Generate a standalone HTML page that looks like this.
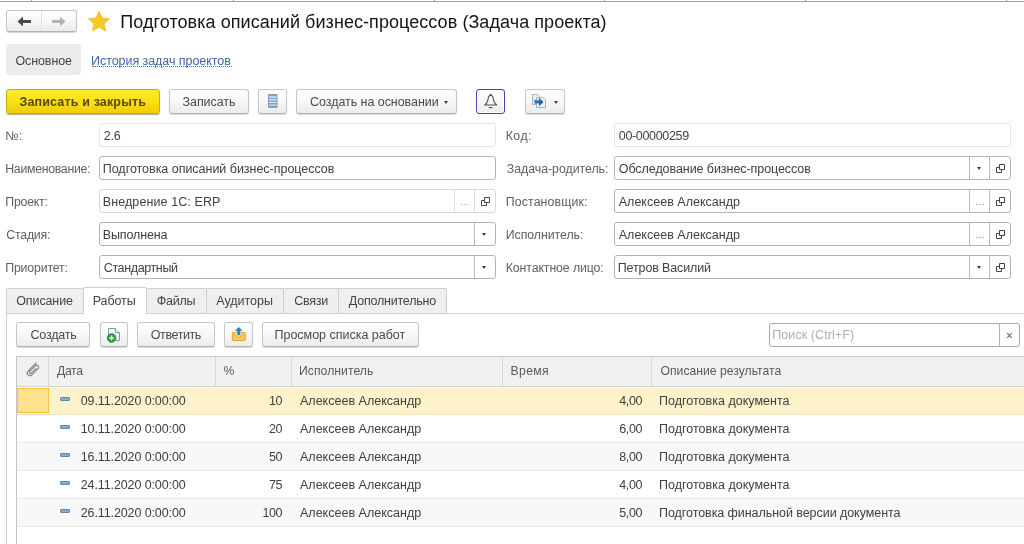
<!DOCTYPE html>
<html lang="ru">
<head>
<meta charset="utf-8">
<title>Подготовка описаний бизнес-процессов (Задача проекта)</title>
<style>
*{box-sizing:border-box;margin:0;padding:0}
html,body{width:1024px;height:544px;overflow:hidden;background:#fff}
body{position:relative;font-family:"Liberation Sans",Arial,sans-serif;font-size:12.5px;color:#333}
.a{position:absolute}
.t{position:absolute;white-space:nowrap;z-index:5}
.btn{position:absolute;height:25px;border:1px solid #c6c6c6;border-bottom-color:#b2b2b2;border-radius:3px;background:linear-gradient(#ffffff,#f8f8f8 45%,#ececec);box-shadow:0 1px 1px rgba(0,0,0,.16)}
.ybtn{background:linear-gradient(#ffeb30,#fbdf14 50%,#f1cd08);border-color:#c2ac1c;box-shadow:0 1px 1px rgba(80,70,0,.45)}
.inp{position:absolute;height:24px;width:397px;border:1px solid #b4b4b4;border-radius:3px;background:#fff}
.inp.ro{border-color:#e6e6e6}
.inp.ro2{border-color:#dadada}
.sep{position:absolute;top:0;bottom:0;width:1px;background:#bcbcbc}
.ro .sep{background:#e6e6e6}.ro2 .sep{background:#dedede}
.dd{position:absolute;width:0;height:0;border-left:2.5px solid transparent;border-right:2.5px solid transparent;border-top:3px solid #3c3c3c}
.tab{position:absolute;top:288px;height:25px;border:1px solid #cfcfcf;border-bottom:none;background:#efefef;border-radius:2px 2px 0 0}
.tab.act{background:#fff;top:287px;height:27px;z-index:2}
.th{position:absolute;top:357px;height:30px;background:#f1f1f1;border-right:1px solid #d8d8d8;border-bottom:1px solid #d4d4d4}
.row{position:absolute;left:17px;width:1007px;height:28px;border-bottom:1px solid #e9e9e9}
.row.alt{background:#f8f8f8}
.row.sel{background:#fdf2c9;border-bottom-color:#eee3b8;border-top:1px solid #fff}
.dash{position:absolute;left:43px;top:10px;width:10px;height:4px;background:#86abd0;border:1px solid #6088b0;border-radius:1px}
.cd{position:absolute;top:0;bottom:0;width:1px;background:rgba(0,0,0,.03)}
</style>
</head>
<body>
<div class="a" style="left:0;top:1px;width:1024px;height:1px;background:#9e9e9e"></div>
<div class="a" style="left:31px;top:0;width:1px;height:1px;background:#9e9e9e"></div><div class="a" style="left:233px;top:0;width:1px;height:1px;background:#9e9e9e"></div><div class="a" style="left:434px;top:0;width:1px;height:1px;background:#9e9e9e"></div><div class="a" style="left:604px;top:0;width:1px;height:1px;background:#9e9e9e"></div><div class="a" style="left:805px;top:0;width:1px;height:1px;background:#9e9e9e"></div><div class="a" style="left:1006px;top:0;width:1px;height:1px;background:#9e9e9e"></div>

<!-- nav -->
<div class="btn" style="left:6px;top:10px;width:71px;height:22px"></div>
<div class="a" style="left:41px;top:11px;width:1px;height:20px;background:#e0e0e0"></div>
<svg class="a" style="left:6px;top:10px" width="71" height="22" viewBox="0 0 71 22">
<path d="M11.500 11.500 L17 6.500 L17 10 L25 10 L25 13 L17 13 L17 16.500 Z" fill="#4a4a4a"/>
<path d="M59.500 11.500 L54 6.500 L54 10 L46 10 L46 13 L54 13 L54 16.500 Z" fill="#b4b4b4"/>
</svg>
<svg class="a" style="left:87px;top:10px" width="24" height="22" viewBox="0 0 24 22">
<path d="M12 1.200 L15.100 7.900 L22.600 8.700 L17 13.700 L18.600 20.900 L12 17.200 L5.400 20.900 L7 13.700 L1.400 8.700 L8.900 7.900 Z" fill="#fac826" stroke="#f0b818" stroke-width=".7" stroke-linejoin="round"/>
</svg>

<!-- subnav -->
<div class="a" style="left:6px;top:44px;width:75px;height:31px;background:#ececec;border-radius:3px"></div>
<div class="a" style="left:92px;top:66px;width:140px;height:0;border-top:1px dotted #4a74b0"></div>

<!-- command bar -->
<div class="btn ybtn" style="left:6px;top:89px;width:154px"></div>
<div class="btn" style="left:169px;top:89px;width:80px"></div>
<div class="btn" style="left:258px;top:89px;width:29px"></div>
<svg class="a" style="left:267px;top:94px" width="11" height="14" viewBox="0 0 11 14">
<rect x="1" y="0" width="9.500" height="14" rx=".8" fill="#7c9fc3"/>
<path d="M2 3h7.500M2 5.700h7.500M2 8.400h7.500M2 11.100h7.500" stroke="#d3e6f6" stroke-width="1.400"/>
</svg>
<div class="btn" style="left:296px;top:89px;width:161px"></div>
<div class="dd" style="left:444px;top:101px"></div>
<div class="btn" style="left:476px;top:89px;width:29px;border-color:#4545a8;box-shadow:inset 0 0 0 1px #fff"></div>
<svg class="a" style="left:481px;top:92px" width="20" height="20" viewBox="0 0 20 20">
<path d="M9.700 3.300 C8.300 3.300 7.400 4.600 7.200 6.500 C6.900 9.200 6.600 10.900 3.700 13 L15.700 13 C12.800 10.900 12.500 9.200 12.200 6.500 C12 4.600 11.100 3.300 9.700 3.300 Z" fill="none" stroke="#505050" stroke-width="1.050" stroke-linejoin="round"/>
<circle cx="9.700" cy="2.700" r=".9" fill="#505050"/>
<path d="M7.500 15 L11.900 15 Q9.700 17.400 7.500 15 Z" fill="#444"/>
</svg>
<div class="btn" style="left:525px;top:89px;width:40px"></div>
<svg class="a" style="left:531px;top:93px" width="17" height="16" viewBox="0 0 17 16">
<path d="M1.500 1.500 H6.500 L8.500 3.500 V11.500 H1.500 Z" fill="#eef2f7" stroke="#a9b6c6"/>
<path d="M5.500 4.500 H12 L14.500 7 V14.500 H5.500 Z" fill="#eef3f8" stroke="#a3b2c4"/>
<path d="M3 7.300 C5 6.600 6.500 6.800 8 7.300 L8 4.800 L12.600 9 L8 13.200 L8 10.700 C6.500 10.200 5 10 3.200 10.900 C4 9.600 4 8.600 3 7.300 Z" fill="#2264a6"/>
<path d="M4.200 8 C5.600 7.600 6.800 7.800 8.300 8.300" fill="none" stroke="#79b8ea" stroke-width=".9"/>
</svg>
<div class="dd" style="left:553.5px;top:101px"></div>

<!-- form left -->
<div class="inp ro" style="left:99px;top:123px"></div>
<div class="inp" style="left:99px;top:156px"></div>
<div class="inp ro2" style="left:99px;top:189px"><div class="sep" style="left:354px"></div><div class="sep" style="left:374px"></div>
<svg class="a" style="left:361px;top:13px" width="8" height="3" viewBox="0 0 8 3"><circle cx="1" cy="1.500" r=".8" fill="#bbb"/><circle cx="4" cy="1.500" r=".8" fill="#bbb"/><circle cx="7" cy="1.500" r=".8" fill="#bbb"/></svg>
<svg class="a" style="left:381px;top:7px" width="9" height="9" viewBox="0 0 9 9"><path d="M3.500 .5h5v5h-5z M3.500 3.500h-3v5h5v-3" fill="none" stroke="#444" stroke-width="1"/></svg></div>
<div class="inp" style="left:99px;top:222px"><div class="sep" style="left:374px"></div><div class="dd" style="left:382px;top:10px"></div></div>
<div class="inp" style="left:99px;top:255px"><div class="sep" style="left:374px"></div><div class="dd" style="left:382px;top:10px"></div></div>

<!-- form right -->
<div class="inp ro" style="left:614px;top:123px"></div>
<div class="inp" style="left:614px;top:156px"><div class="sep" style="left:354px"></div><div class="sep" style="left:374px"></div><div class="dd" style="left:362px;top:10px"></div>
<svg class="a" style="left:381px;top:7px" width="9" height="9" viewBox="0 0 9 9"><path d="M3.500 .5h5v5h-5z M3.500 3.500h-3v5h5v-3" fill="none" stroke="#444" stroke-width="1"/></svg></div>
<div class="inp" style="left:614px;top:189px"><div class="sep" style="left:354px"></div><div class="sep" style="left:374px"></div>
<svg class="a" style="left:361px;top:13px" width="8" height="3" viewBox="0 0 8 3"><circle cx="1" cy="1.500" r=".8" fill="#aaa"/><circle cx="4" cy="1.500" r=".8" fill="#aaa"/><circle cx="7" cy="1.500" r=".8" fill="#aaa"/></svg>
<svg class="a" style="left:381px;top:7px" width="9" height="9" viewBox="0 0 9 9"><path d="M3.500 .5h5v5h-5z M3.500 3.500h-3v5h5v-3" fill="none" stroke="#444" stroke-width="1"/></svg></div>
<div class="inp" style="left:614px;top:222px"><div class="sep" style="left:354px"></div><div class="sep" style="left:374px"></div>
<svg class="a" style="left:361px;top:13px" width="8" height="3" viewBox="0 0 8 3"><circle cx="1" cy="1.500" r=".8" fill="#aaa"/><circle cx="4" cy="1.500" r=".8" fill="#aaa"/><circle cx="7" cy="1.500" r=".8" fill="#aaa"/></svg>
<svg class="a" style="left:381px;top:7px" width="9" height="9" viewBox="0 0 9 9"><path d="M3.500 .5h5v5h-5z M3.500 3.500h-3v5h5v-3" fill="none" stroke="#444" stroke-width="1"/></svg></div>
<div class="inp" style="left:614px;top:255px"><div class="sep" style="left:354px"></div><div class="sep" style="left:374px"></div><div class="dd" style="left:362px;top:10px"></div>
<svg class="a" style="left:381px;top:7px" width="9" height="9" viewBox="0 0 9 9"><path d="M3.500 .5h5v5h-5z M3.500 3.500h-3v5h5v-3" fill="none" stroke="#444" stroke-width="1"/></svg></div>

<!-- tabs + panel -->
<div class="a" style="left:6px;top:313px;width:1030px;height:240px;border:1px solid #cfcfcf;background:#fff"></div>
<div class="tab" style="left:6px;width:78px"></div>
<div class="tab act" style="left:83px;width:64px"></div>
<div class="tab" style="left:146px;width:61px"></div>
<div class="tab" style="left:206px;width:78px"></div>
<div class="tab" style="left:283px;width:56px"></div>
<div class="tab" style="left:338px;width:109px"></div>

<!-- panel cmd bar -->
<div class="btn" style="left:16px;top:322px;width:74px"></div>
<div class="btn" style="left:100px;top:322px;width:28px"></div>
<svg class="a" style="left:106px;top:327px" width="16" height="16" viewBox="0 0 16 16">
<path d="M2.500 1.500 L9.500 1.500 L13.500 5.500 L13.500 13.500 L2.500 13.500 Z" fill="#f1f4fa" stroke="#8f96a3" stroke-width="1"/>
<path d="M9.500 1.500 L9.500 5.500 L13.500 5.500" fill="#fff" stroke="#8f96a3" stroke-width="1"/>
<circle cx="5.600" cy="11" r="4.300" fill="#2f9c3f"/>
<circle cx="5.600" cy="11" r="4.300" fill="none" stroke="#1f8230" stroke-width=".8"/>
<path d="M5.600 8.500 V13.500 M3.100 11 H8.100" stroke="#e8f7e8" stroke-width="1.400"/>
</svg>
<div class="btn" style="left:137px;top:322px;width:78px"></div>
<div class="btn" style="left:224px;top:322px;width:29px"></div>
<svg class="a" style="left:230px;top:326px" width="18" height="17" viewBox="0 0 18 17">
<rect x="2.300" y="6.500" width="13" height="8" rx="1" fill="#f6cb62" stroke="#e3a32c" stroke-width="1"/>
<path d="M2.500 7 L8.750 12 L15 7" fill="none" stroke="#e9b24a" stroke-width="1"/>
<path d="M2.500 14.500 L7 10.500 M15 14.500 L10.500 10.500" fill="none" stroke="#eab654" stroke-width=".8"/>
<path d="M5 6.800 L8.750 10.800 L12.500 6.800 Z" fill="#fdf6e3"/>
<path d="M8.750 1 L12.600 4.800 L10.300 4.800 L10.300 9.300 L7.200 9.300 L7.200 4.800 L4.900 4.800 Z" fill="#2f7dd6"/>
</svg>
<div class="btn" style="left:262px;top:322px;width:157px"></div>
<div class="inp" style="left:769px;top:323px;width:251px;border-color:#a9a9a9"><div class="sep" style="left:229px;background:#b4b4b4"></div>
<svg class="a" style="left:236px;top:8px" width="7" height="7" viewBox="0 0 7 7"><path d="M1.200 1.200L5.800 5.800M5.800 1.200L1.200 5.800" stroke="#707070" stroke-width="1.200"/></svg></div>

<!-- table -->
<div class="a" style="left:16px;top:356px;width:1010px;height:200px;border:1px solid #c6c6c6;border-bottom:none"></div>
<div class="th" style="left:17px;width:32px"></div>
<div class="th" style="left:49px;width:167px"></div>
<div class="th" style="left:216px;width:76px"></div>
<div class="th" style="left:292px;width:211px"></div>
<div class="th" style="left:503px;width:149px"></div>
<div class="th" style="left:652px;width:380px"></div>

<svg class="a" style="left:24px;top:361px;z-index:6" width="18" height="18" viewBox="-9 -9 18 18">
<g transform="rotate(-45)"><path d="M7,-2.700 L-4.300,-2.700 A2.700,2.700 0 0 0 -4.300,2.700 L4.600,2.700 A2,2 0 0 0 4.600,-1.300 L-3.300,-1.300 A1.200,1.200 0 0 0 -3.300,1.100 L3.300,1.100" fill="none" stroke="#7a7a7a" stroke-width="1" stroke-linecap="round"/></g>
</svg>
<div class="row sel" style="top:387px"><div class="a" style="left:0;top:0;width:32px;height:25px;background:#fde28e;border:1px solid #f3c43a"></div><i class="dash" style="top:9px"></i></div>
<div class="row" style="top:415px"><i class="dash"></i></div>
<div class="row alt" style="top:443px"><i class="dash"></i></div>
<div class="row" style="top:471px"><i class="dash"></i></div>
<div class="row alt" style="top:499px"><i class="dash"></i></div>

<div id="tx" style="position:absolute;left:0;top:0;width:1024px;height:544px;z-index:5;will-change:transform">
<div class="t" style="left:120.25px;top:10.76px;font-size:18px;line-height:22px;color:#141414;letter-spacing:0.062px;">Подготовка описаний бизнес-процессов (Задача проекта)</div>
<div class="t" style="left:15.50px;top:53.67px;font-size:12.5px;line-height:14px;color:#444;letter-spacing:-0.118px;">Основное</div>
<div class="t" style="left:91.00px;top:53.67px;font-size:12.5px;line-height:14px;color:#3a66a5;letter-spacing:-0.053px;">История задач проектов</div>
<div class="t" style="left:19.50px;top:94.67px;font-size:12.5px;line-height:14px;color:#574a10;letter-spacing:0.150px;font-weight:bold;">Записать и закрыть</div>
<div class="t" style="left:182.50px;top:94.67px;font-size:12.5px;line-height:14px;color:#4a4a4a;letter-spacing:-0.058px;">Записать</div>
<div class="t" style="left:310.00px;top:94.67px;font-size:12.5px;line-height:14px;color:#4a4a4a;letter-spacing:-0.050px;">Создать на основании</div>
<div class="t" style="left:5.25px;top:128.74px;font-size:12.3px;line-height:14px;color:#606060;letter-spacing:0.450px;">№:</div>
<div class="t" style="left:5.25px;top:161.74px;font-size:12.3px;line-height:14px;color:#606060;letter-spacing:-0.291px;">Наименование:</div>
<div class="t" style="left:5.25px;top:194.74px;font-size:12.3px;line-height:14px;color:#606060;letter-spacing:-0.209px;">Проект:</div>
<div class="t" style="left:6.25px;top:227.74px;font-size:12.3px;line-height:14px;color:#606060;letter-spacing:-0.194px;">Стадия:</div>
<div class="t" style="left:5.25px;top:260.74px;font-size:12.3px;line-height:14px;color:#606060;letter-spacing:-0.156px;">Приоритет:</div>
<div class="t" style="left:103.75px;top:128.67px;font-size:12.5px;line-height:14px;color:#404040;letter-spacing:-0.212px;">2.6</div>
<div class="t" style="left:102.75px;top:161.67px;font-size:12.5px;line-height:14px;color:#404040;letter-spacing:-0.025px;">Подготовка описаний бизнес-процессов</div>
<div class="t" style="left:102.75px;top:194.67px;font-size:12.5px;line-height:14px;color:#404040;letter-spacing:0.096px;">Внедрение 1С: ERP</div>
<div class="t" style="left:102.75px;top:227.67px;font-size:12.5px;line-height:14px;color:#404040;letter-spacing:-0.134px;">Выполнена</div>
<div class="t" style="left:103.75px;top:260.67px;font-size:12.5px;line-height:14px;color:#404040;letter-spacing:-0.375px;">Стандартный</div>
<div class="t" style="left:505.75px;top:128.74px;font-size:12.3px;line-height:14px;color:#606060;letter-spacing:0.450px;">Код:</div>
<div class="t" style="left:506.75px;top:161.74px;font-size:12.3px;line-height:14px;color:#606060;letter-spacing:-0.004px;">Задача-родитель:</div>
<div class="t" style="left:505.75px;top:194.74px;font-size:12.3px;line-height:14px;color:#606060;letter-spacing:0.142px;">Постановщик:</div>
<div class="t" style="left:505.75px;top:227.74px;font-size:12.3px;line-height:14px;color:#606060;letter-spacing:-0.028px;">Исполнитель:</div>
<div class="t" style="left:505.75px;top:260.74px;font-size:12.3px;line-height:14px;color:#606060;letter-spacing:-0.093px;">Контактное лицо:</div>
<div class="t" style="left:618.75px;top:128.67px;font-size:12.5px;line-height:14px;color:#404040;letter-spacing:-0.323px;">00-00000259</div>
<div class="t" style="left:618.75px;top:161.67px;font-size:12.5px;line-height:14px;color:#404040;letter-spacing:-0.066px;">Обследование бизнес-процессов</div>
<div class="t" style="left:618.75px;top:194.67px;font-size:12.5px;line-height:14px;color:#404040;letter-spacing:0.012px;">Алексеев Александр</div>
<div class="t" style="left:618.75px;top:227.67px;font-size:12.5px;line-height:14px;color:#404040;letter-spacing:0.012px;">Алексеев Александр</div>
<div class="t" style="left:617.75px;top:260.67px;font-size:12.5px;line-height:14px;color:#404040;letter-spacing:-0.139px;">Петров Василий</div>
<div class="t" style="left:16.25px;top:293.67px;font-size:12.5px;line-height:14px;color:#444;letter-spacing:-0.116px;">Описание</div>
<div class="t" style="left:92.75px;top:293.67px;font-size:12.5px;line-height:14px;color:#444;letter-spacing:-0.087px;">Работы</div>
<div class="t" style="left:156.75px;top:293.67px;font-size:12.5px;line-height:14px;color:#444;letter-spacing:-0.245px;">Файлы</div>
<div class="t" style="left:216.25px;top:293.67px;font-size:12.5px;line-height:14px;color:#444;letter-spacing:-0.007px;">Аудиторы</div>
<div class="t" style="left:294.25px;top:293.67px;font-size:12.5px;line-height:14px;color:#444;letter-spacing:-0.257px;">Связи</div>
<div class="t" style="left:348.75px;top:293.67px;font-size:12.5px;line-height:14px;color:#444;letter-spacing:-0.209px;">Дополнительно</div>
<div class="t" style="left:30.50px;top:327.67px;font-size:12.5px;line-height:14px;color:#4a4a4a;letter-spacing:-0.207px;">Создать</div>
<div class="t" style="left:150.75px;top:327.67px;font-size:12.5px;line-height:14px;color:#4a4a4a;letter-spacing:-0.400px;">Ответить</div>
<div class="t" style="left:274.50px;top:327.67px;font-size:12.5px;line-height:14px;color:#4a4a4a;letter-spacing:-0.014px;">Просмор списка работ</div>
<div class="t" style="left:772.25px;top:327.67px;font-size:12.5px;line-height:14px;color:#aeaeae;letter-spacing:0.085px;">Поиск (Ctrl+F)</div>
<div class="t" style="left:57.00px;top:363.77px;font-size:12.2px;line-height:14px;color:#5a5a5a;letter-spacing:-0.320px;">Дата</div>
<div class="t" style="left:223.50px;top:363.77px;font-size:12.2px;line-height:14px;color:#5a5a5a;letter-spacing:0.000px;">%</div>
<div class="t" style="left:299.00px;top:363.77px;font-size:12.2px;line-height:14px;color:#5a5a5a;letter-spacing:0.046px;">Исполнитель</div>
<div class="t" style="left:510.50px;top:363.77px;font-size:12.2px;line-height:14px;color:#5a5a5a;letter-spacing:0.359px;">Время</div>
<div class="t" style="left:660.50px;top:363.77px;font-size:12.2px;line-height:14px;color:#5a5a5a;letter-spacing:0.004px;">Описание результата</div>
<div class="t" style="left:80.75px;top:393.67px;font-size:12.5px;line-height:14px;color:#404040;letter-spacing:-0.109px;">09.11.2020 0:00:00</div>
<div class="t" style="left:268.95px;top:393.67px;font-size:12.5px;line-height:14px;color:#404040;letter-spacing:-0.400px;">10</div>
<div class="t" style="left:300.00px;top:393.67px;font-size:12.5px;line-height:14px;color:#404040;letter-spacing:0.012px;">Алексеев Александр</div>
<div class="t" style="left:619.25px;top:393.67px;font-size:12.5px;line-height:14px;color:#404040;letter-spacing:-0.376px;">4,00</div>
<div class="t" style="left:659.00px;top:393.67px;font-size:12.5px;line-height:14px;color:#404040;letter-spacing:0.013px;">Подготовка документа</div>
<div class="t" style="left:80.75px;top:421.67px;font-size:12.5px;line-height:14px;color:#404040;letter-spacing:-0.109px;">10.11.2020 0:00:00</div>
<div class="t" style="left:268.95px;top:421.67px;font-size:12.5px;line-height:14px;color:#404040;letter-spacing:-0.400px;">20</div>
<div class="t" style="left:300.00px;top:421.67px;font-size:12.5px;line-height:14px;color:#404040;letter-spacing:0.012px;">Алексеев Александр</div>
<div class="t" style="left:619.25px;top:421.67px;font-size:12.5px;line-height:14px;color:#404040;letter-spacing:-0.376px;">6,00</div>
<div class="t" style="left:659.00px;top:421.67px;font-size:12.5px;line-height:14px;color:#404040;letter-spacing:0.013px;">Подготовка документа</div>
<div class="t" style="left:80.75px;top:449.67px;font-size:12.5px;line-height:14px;color:#404040;letter-spacing:-0.109px;">16.11.2020 0:00:00</div>
<div class="t" style="left:268.95px;top:449.67px;font-size:12.5px;line-height:14px;color:#404040;letter-spacing:-0.400px;">50</div>
<div class="t" style="left:300.00px;top:449.67px;font-size:12.5px;line-height:14px;color:#404040;letter-spacing:0.012px;">Алексеев Александр</div>
<div class="t" style="left:619.25px;top:449.67px;font-size:12.5px;line-height:14px;color:#404040;letter-spacing:-0.376px;">8,00</div>
<div class="t" style="left:659.00px;top:449.67px;font-size:12.5px;line-height:14px;color:#404040;letter-spacing:0.013px;">Подготовка документа</div>
<div class="t" style="left:80.75px;top:477.67px;font-size:12.5px;line-height:14px;color:#404040;letter-spacing:-0.109px;">24.11.2020 0:00:00</div>
<div class="t" style="left:268.95px;top:477.67px;font-size:12.5px;line-height:14px;color:#404040;letter-spacing:-0.400px;">75</div>
<div class="t" style="left:300.00px;top:477.67px;font-size:12.5px;line-height:14px;color:#404040;letter-spacing:0.012px;">Алексеев Александр</div>
<div class="t" style="left:619.25px;top:477.67px;font-size:12.5px;line-height:14px;color:#404040;letter-spacing:-0.376px;">4,00</div>
<div class="t" style="left:659.00px;top:477.67px;font-size:12.5px;line-height:14px;color:#404040;letter-spacing:0.013px;">Подготовка документа</div>
<div class="t" style="left:80.75px;top:505.67px;font-size:12.5px;line-height:14px;color:#404040;letter-spacing:-0.109px;">26.11.2020 0:00:00</div>
<div class="t" style="left:262.40px;top:505.67px;font-size:12.5px;line-height:14px;color:#404040;letter-spacing:-0.400px;">100</div>
<div class="t" style="left:300.00px;top:505.67px;font-size:12.5px;line-height:14px;color:#404040;letter-spacing:0.012px;">Алексеев Александр</div>
<div class="t" style="left:619.25px;top:505.67px;font-size:12.5px;line-height:14px;color:#404040;letter-spacing:-0.376px;">5,00</div>
<div class="t" style="left:659.00px;top:505.67px;font-size:12.5px;line-height:14px;color:#404040;letter-spacing:-0.058px;">Подготовка финальной версии документа</div>
</div>
</body>
</html>
